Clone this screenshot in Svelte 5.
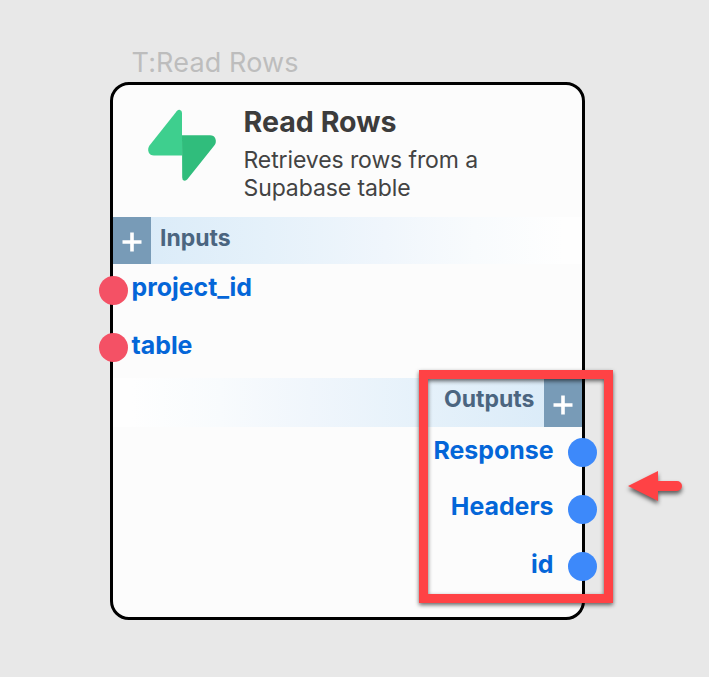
<script>
  const inputs = ['project_id', 'table'];
  const outputs = ['Response', 'Headers', 'id'];
</script>

{#snippet plus()}
  <div class="add">
    <svg width="20" height="20" viewBox="0 0 20 20" aria-hidden="true">
      <path d="M10 0.5V19.5M0.5 10H19.5" stroke="#fff" stroke-width="3.6" fill="none" />
    </svg>
  </div>
{/snippet}

<main class="canvas">
  <div class="caption"><span>T:Read Rows</span></div>
  <section class="node">
    <header>
      <svg class="logo" width="68" height="71" viewBox="0 0 68 71" aria-hidden="true">
        <path fill="#3ecf8e" d="M34 45.5H6Q2 45.5 .7 42.3Q-.8 38.5 1.7 35.2L28.7 1.2Q30.2-.4 32-.1Q34 .4 34 3Z" />
        <path fill="#30bd7c" d="M34 25.3H62Q66 25.3 67.3 28.5Q68.8 32.3 66.3 35.6L39.4 69.3Q37.9 71 36 70.6Q34.2 70 34.2 67.5Z" />
      </svg>
      <div class="info">
        <h1>Read Rows</h1>
        <p>Retrieves rows from a<br />Supabase table</p>
      </div>
    </header>
    <div class="bar">
      {@render plus()}
      <span>Inputs</span>
    </div>
    <ul class="inputs">
      {#each inputs as name}
        <li><i></i><b>{name}</b></li>
      {/each}
    </ul>
    <div class="bar out">
      <span>Outputs</span>
      {@render plus()}
    </div>
    <ul class="outputs">
      {#each outputs as name}
        <li><b>{name}</b><i></i></li>
      {/each}
    </ul>
  </section>
  <div class="highlight"></div>
  <svg class="arrow" width="70" height="50" viewBox="0 0 70 50" aria-hidden="true">
    <path fill="#ff4245" d="M8 26L38 11V21H57A5 5 0 0 1 57 31H38V41Z" />
  </svg>
</main>

<style>
  :global(body) { background: #e8e8e8; }
  .canvas {
    position: relative;
    box-sizing: border-box;
    width: 709px;
    height: 677px;
    padding: 45px 124px 0 110px;
    overflow: hidden;
    background: #e8e8e8;
    font-family: Inter, "Liberation Sans", sans-serif;
  }
  .caption {
    height: 36.5px;
    padding-left: 21.5px;
    font-size: 27px;
    letter-spacing: .15px;
    line-height: 36px;
    color: #bdbdbd;
    white-space: nowrap;
  }
  .node {
    box-sizing: border-box;
    width: 475px;
    height: 538.5px;
    border: 3px solid #000;
    border-radius: 19px;
    background: #fcfcfc;
  }
  header {
    display: flex;
    box-sizing: border-box;
    height: 132.5px;
    padding: 25.5px 0 0 35px;
  }
  .logo { flex: none; overflow: visible; }
  .info { margin-left: 27.5px; }
  h1 {
    margin: -6px 0 0;
    font-size: 28.6px;
    line-height: 36px;
    font-weight: 700;
    color: #3c3c3c;
    white-space: nowrap;
  }
  p {
    margin: 6px 0 0;
    font-size: 23px;
    letter-spacing: -.1px;
    line-height: 28px;
    color: #434343;
    white-space: nowrap;
  }
  .bar {
    display: flex;
    height: 47px;
    background: linear-gradient(90deg, #d8eaf8, #e5f1fa 33%, #f0f6fc 58%, #f8fbfd 77%, #fefefe 96%);
    color: #4b6580;
    font-size: 23px;
    font-weight: 700;
    line-height: 42px;
  }
  .bar span { margin-left: 9px; }
  .bar.out {
    height: 49px;
    justify-content: flex-end;
    background: linear-gradient(270deg, #d8eaf8, #e5f1fa 33%, #f0f6fc 58%, #f8fbfd 77%, #fefefe 96%);
  }
  .bar.out span { margin: 0 9.5px 0 0; }
  .add {
    display: flex;
    align-items: center;
    justify-content: center;
    width: 38px;
    padding-top: 3px;
    box-sizing: border-box;
    background: #789bb7;
  }
  .out .add { padding-top: 5px; }
  ul {
    margin: 0;
    padding: 0;
    list-style: none;
    color: #0466d8;
    font-size: 24.9px;
  }
  li { display: flex; align-items: center; height: 57px; }
  b { font-weight: 700; line-height: 30px; padding-bottom: 6px; }
  .inputs li:first-child b,
  .outputs li:nth-child(2) b { padding-bottom: 8px; }
  i { flex: none; width: 29px; height: 29px; border-radius: 50%; position: relative; }
  .inputs { box-sizing: border-box; height: 114px; display: flow-root; }
  .inputs li { margin-left: -14px; }
  .inputs li:first-child { margin-top: -2px; }
  .inputs i { background: #f45165; margin-right: 3.5px; }
  .outputs { margin-top: -3px; }
  .outputs li { justify-content: flex-end; margin-right: -15px; }
  .outputs i { background: #3d89fa; margin-left: 14.5px; }
  .highlight {
    position: absolute;
    left: 419px;
    top: 370px;
    box-sizing: border-box;
    width: 194px;
    height: 233px;
    border: 9px solid #ff4245;
    filter: drop-shadow(0 2px 2px rgba(0, 0, 0, .6));
  }
  .arrow {
    position: absolute;
    left: 620px;
    top: 460px;
    filter: drop-shadow(0 3px 2px rgba(0, 0, 0, .6));
  }
</style>
